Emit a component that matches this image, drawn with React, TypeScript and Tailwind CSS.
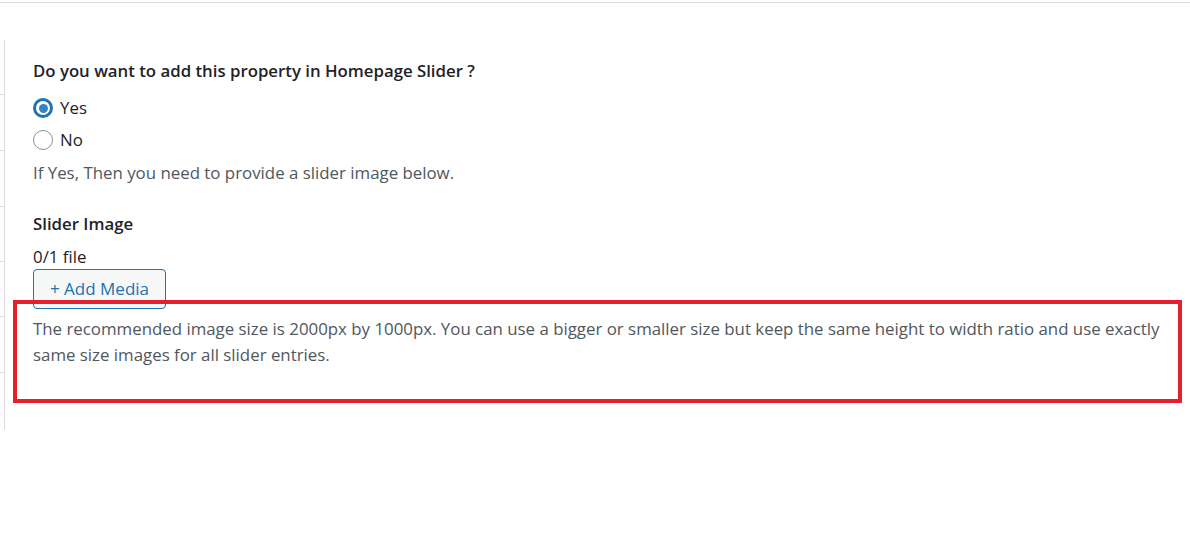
export default function App() {
  const ticks = [55, 56, 56, 55, 55, 56, 57];

  return (
    <div className="relative w-[1190px] h-[535px] bg-white overflow-hidden font-['Open_Sans',sans-serif]">
      {/* top rule */}
      <div className="mt-[2px] h-px w-full bg-[#dcdcde]" />

      <div className="flex mt-[37px]">
        {/* left table edge */}
        <div className="flex w-[5px] flex-col border-r border-[#dcdcde]">
          {ticks.map((h, i) => (
            <div
              key={i}
              style={{ height: h }}
              className={i < ticks.length - 1 ? "border-b border-[#dcdcde]" : ""}
            />
          ))}
        </div>

        {/* form field */}
        <div className="flex flex-col pl-[28px] pt-[19px] text-[16.85px] text-[#1d2327]">
          <h3 className="h-[24px] leading-[24px] text-[16.8px] font-semibold">
            Do you want to add this property in Homepage Slider ?
          </h3>

          <label className="mt-[9px] flex h-[32px] items-center gap-[7px]">
            <span className="flex h-[20px] w-[20px] items-center justify-center rounded-full border-[3px] border-[#2271b1]">
              <span className="h-[9px] w-[9px] rounded-full bg-[#3582c4]" />
            </span>
            <span>Yes</span>
          </label>
          <label className="flex h-[32px] items-center gap-[7px]">
            <span className="h-[20px] w-[20px] rounded-full border border-[#8c8f94]" />
            <span>No</span>
          </label>

          <p className="mt-[5px] h-[24px] leading-[24px] text-[#50575e]">
            If Yes, Then you need to provide a slider image below.
          </p>

          <h3 className="mt-[27px] h-[24px] leading-[24px] text-[16.8px] font-semibold">Slider Image</h3>
          <p className="mt-[9px] h-[24px] leading-[24px]">0/1 file</p>

          <button className="h-[40px] w-[133px] rounded-[4px] border border-[#2271b1] bg-[#f6f7f7] text-[17px] text-[#2271b1]">
            + Add Media
          </button>

          <p className="mt-[7px] w-[1150px] leading-[26px] text-[#50575e]">
            The recommended image size is 2000px by 1000px. You can use a bigger or smaller size but keep the same height to width ratio and use exactly same size images for all slider entries.
          </p>
        </div>
      </div>

      {/* annotation */}
      <div className="pointer-events-none absolute left-[13px] top-[300px] h-[103px] w-[1169px] border-4 border-[#e5202e]" />
    </div>
  );
}
